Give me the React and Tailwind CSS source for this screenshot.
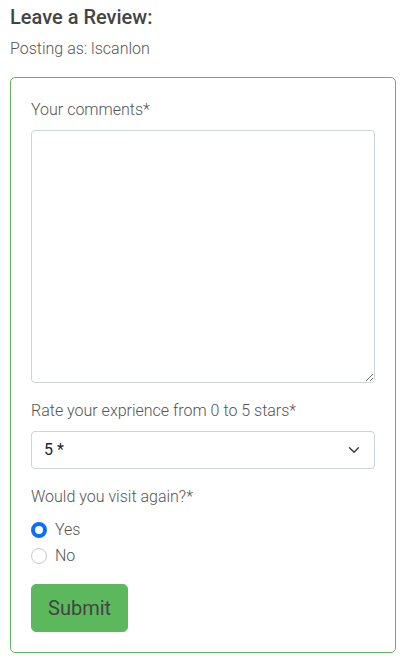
import React, { useState } from "react";

export default function App() {
  const [visit, setVisit] = useState("yes");

  return (
    <div className="bg-white min-h-screen px-[10px] pt-[5px] font-['Roboto',_'Liberation_Sans',_sans-serif] text-[#444]">
      <h2 className="text-[20px] leading-[24px] font-medium text-[#444]">Leave a Review:</h2>
      <p className="mt-[7.5px] text-[16px] leading-[24px] font-light text-[#555]">Posting as: lscanlon</p>

      <form className="mt-[16px] w-[386px] rounded-[5px] border border-[#5cb85c] p-5">
        <label className="block text-[16px] leading-[24px] font-light text-[#555]">Your comments*</label>
        <textarea className="mt-2 block h-[253px] w-full rounded-[4px] border border-[#ced4da] bg-white px-3 py-1.5 text-[16px] outline-none" />

        <label className="mt-4 block text-[16px] leading-[24px] font-light text-[#555]">
          Rate your exprience from 0 to 5 stars*
        </label>
        <div className="relative mt-2">
          <select
            defaultValue="5"
            className="block h-[38px] w-full appearance-none rounded-[4px] border border-[#ced4da] bg-white pl-3 pr-9 text-[16px] text-[#212529] outline-none"
          >
            <option value="0">0 *</option>
            <option value="1">1 *</option>
            <option value="2">2 *</option>
            <option value="3">3 *</option>
            <option value="4">4 *</option>
            <option value="5">5 *</option>
          </select>
          <svg
            className="pointer-events-none absolute right-[15px] top-1/2 -translate-y-1/2"
            width="12"
            height="12"
            viewBox="0 0 16 16"
            fill="none"
            stroke="#343a40"
            strokeWidth="1.8"
            strokeLinecap="round"
            strokeLinejoin="round"
          >
            <path d="M2 5l6 6 6-6" />
          </svg>
        </div>

        <label className="mt-4 block text-[16px] leading-[24px] font-light text-[#555]">Would you visit again?*</label>
        <div className="mt-[9px]">
          {[
            ["yes", "Yes"],
            ["no", "No"],
          ].map(([v, t]) => (
            <label key={v} className="mb-[2px] flex h-6 items-center gap-[8px] text-[16px] font-light text-[#555]">
              <span
                onClick={() => setVisit(v)}
                className={
                  visit === v
                    ? "box-border h-4 w-4 rounded-full border-[4px] border-[#0d6efd] bg-white"
                    : "box-border h-4 w-4 rounded-full border border-[#c6c9cc] bg-white"
                }
              />
              {t}
            </label>
          ))}
        </div>

        <button
          type="button"
          className="mt-[14.5px] h-[48px] rounded-[5px] border border-[#5cb85c] bg-[#5cb85c] px-4 text-[20px] text-[#444]"
        >
          Submit
        </button>
      </form>
    </div>
  );
}
